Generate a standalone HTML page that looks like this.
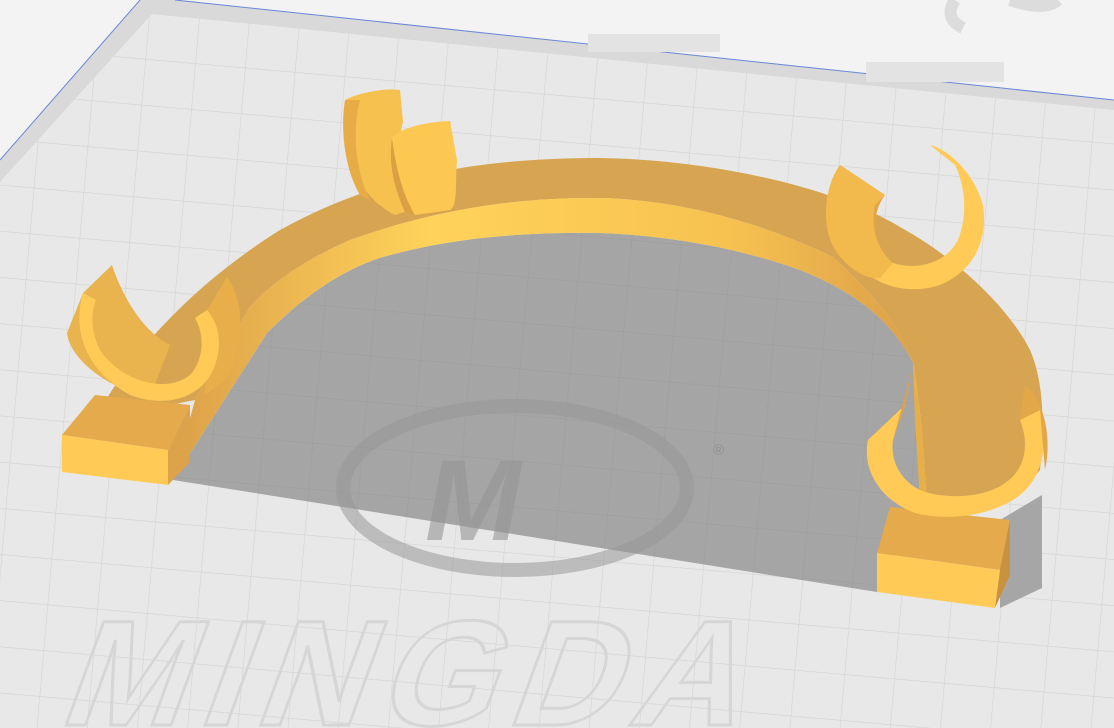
<!DOCTYPE html>
<html><head><meta charset="utf-8"><style>
html,body{margin:0;padding:0;width:1114px;height:728px;overflow:hidden;background:#f3f3f3}
svg{display:block}
</style></head><body>
<svg width="1114" height="728" viewBox="0 0 1114 728" xmlns="http://www.w3.org/2000/svg">
<defs>
<pattern id="g" width="50" height="46" patternUnits="userSpaceOnUse" patternTransform="rotate(5)">
<rect width="50" height="46" fill="#e8e8e8"/>
<path d="M0 0H50M0 0V46" stroke="#d3d3d3" stroke-width="1.2" fill="none"/>
</pattern>
<pattern id="gs" width="50" height="46" patternUnits="userSpaceOnUse" patternTransform="rotate(5)">
<rect width="50" height="46" fill="#a5a5a5"/>
<path d="M0 0H50M0 0V46" stroke="#9c9c9c" stroke-width="1" fill="none"/>
</pattern>
<linearGradient id="wall" x1="0" y1="0" x2="1" y2="0">
<stop offset="0" stop-color="#dca048"/><stop offset="0.35" stop-color="#ffd35a"/><stop offset="0.75" stop-color="#f7c250"/><stop offset="1" stop-color="#dca048"/>
</linearGradient>
</defs>
<rect width="1114" height="728" fill="#f3f3f3"/>
<polygon points="140,0 175,0 1114,100 1114,728 0,728 0,160" fill="#d9d9d9"/>
<polygon points="152,14 1114,110 1114,728 0,728 0,182" fill="url(#g)"/>
<polyline points="0,160 140,0" stroke="#6a86d8" stroke-width="1" fill="none"/>
<polyline points="175,0 1114,100" stroke="#6a86d8" stroke-width="1" fill="none"/>
<rect x="588" y="34" width="132" height="18" fill="#e3e3e3"/>
<rect x="866" y="62" width="138" height="20" fill="#e3e3e3"/>
<path d="M955,0 q-12,18 8,28 M1010,0 q35,12 48,0" stroke="#dcdcdc" stroke-width="12" fill="none"/>
<!-- shadow -->
<path d="M173,480 L267,333 C300,300 340,270 383,257 C450,238 520,232 600,233 C680,236 750,252 800,270 C850,290 890,317 913,363 L920,500 L877,592 Z" fill="url(#gs)"/>
<polygon points="1000,520 1042,495 1042,588 1000,608" fill="#a6a6a6"/>
<!-- logo -->
<ellipse cx="515" cy="488" rx="172" ry="82" fill="none" stroke="#989898" stroke-width="14" opacity="0.55"/>
<text x="425" y="540" font-family="Liberation Sans, sans-serif" font-weight="bold" font-style="italic" font-size="115" fill="#959595" opacity="0.6">M</text>
<text x="713" y="455" font-family="Liberation Sans, sans-serif" font-size="15" fill="#8f8f8f">®</text>
<text x="60" y="725" font-family="Liberation Sans, sans-serif" font-weight="bold" font-size="150" fill="none" stroke="#d6d6d6" stroke-width="3" transform="skewX(-20) translate(260,0)" letter-spacing="14">MINGDA</text>
<!-- arch top face -->
<path d="M95,420 C130,350 200,280 280,230 C380,175 480,158 600,158 C720,160 840,190 900,227 C960,260 1010,310 1030,350 C1043,380 1045,420 1040,470 L1017,497 L927,513 C925,460 920,400 913,363 C900,330 880,300 833,257 C760,222 680,200 600,198 C500,197 420,215 350,240 C300,262 270,285 250,307 L195,400 Z" fill="#d7a552"/>
<!-- inner wall -->
<path d="M173,480 L195,400 L250,307 C270,285 300,262 350,240 C420,215 500,197 600,198 C680,200 760,222 833,257 C880,300 900,330 913,363 L913,363 C890,317 850,290 800,270 C750,252 680,236 600,233 C520,232 450,238 383,257 C340,270 300,300 267,333 Z" fill="url(#wall)"/>
<path d="M913,363 C920,400 925,460 927,513 L920,500 L915,420Z" fill="#e8ae48"/>
<!-- left foot -->
<polygon points="62,435 95,395 190,405 168,450" fill="#e4aa4c"/>
<polygon points="62,435 168,450 168,485 62,472" fill="#ffcb56"/>
<polygon points="168,450 190,405 190,462 168,485" fill="#dda34a"/>
<!-- right foot -->
<polygon points="877,553 890,507 1010,520 1000,570" fill="#e4aa4c"/>
<polygon points="877,553 1000,570 995,608 877,592" fill="#ffcb56"/>
<polygon points="1000,570 1010,520 1010,575 995,608" fill="#c9923f"/>
<!-- left clip -->
<path d="M83,293 L112,265 C120,290 140,330 170,345 L150,397 C110,390 70,360 67,333 Z" fill="#e9b34e"/>
<path d="M207,310 L227,277 C245,300 245,350 225,380 L205,395 Z" fill="#e7ae4a"/>
<path d="M83,293 C72,330 85,370 130,395 C170,410 205,395 215,365 C222,345 220,325 207,310 L195,318 C205,335 204,360 190,375 C165,395 120,380 100,350 C92,335 90,315 96,300 Z" fill="#ffcb56"/>
<!-- upper left clip -->
<path d="M345,100 C360,92 385,88 400,90 L403,122 C395,150 398,185 410,210 L395,215 C365,200 350,170 345,140 Z" fill="#f7c14f"/>
<path d="M345,100 C340,130 345,170 360,195 L370,200 C355,170 352,130 360,100Z" fill="#e7ac46"/>
<path d="M392,138 C400,128 425,122 450,121 L457,160 C455,185 458,205 450,210 L415,215 C398,195 390,170 392,138Z" fill="#fcc852"/>
<path d="M392,138 C395,160 400,190 415,215 L405,212 C395,190 388,165 392,138Z" fill="#dca044"/>
<!-- upper right clip -->
<path d="M840,165 L885,195 C870,215 872,245 893,263 L880,275 C850,260 835,225 840,165Z" fill="#e1a648"/>
<path d="M930,145 C950,150 975,175 983,205 C988,240 975,270 940,285 C910,295 880,285 870,275 L893,263 C915,270 945,265 958,240 C968,215 965,185 955,165 Z" fill="#ffca55"/>
<path d="M840,165 C825,185 820,225 835,250 C850,272 870,280 880,278 L893,263 C878,250 870,230 875,205 L885,195 Z" fill="#f2b94d"/>
<!-- lower right clip -->
<path d="M868,440 C862,470 880,500 915,513 C950,522 995,515 1020,495 C1045,475 1048,440 1040,410 L1020,420 C1030,445 1025,470 1005,483 C985,498 945,500 920,490 C900,480 890,460 893,440 L905,405 Z" fill="#ffcb56"/>
<path d="M905,405 L912,370 L893,440 Z" fill="#dea244"/>
<path d="M1020,420 L1025,385 C1045,400 1052,440 1045,470 L1040,410Z" fill="#e2a746"/>
</svg>
</body></html>
